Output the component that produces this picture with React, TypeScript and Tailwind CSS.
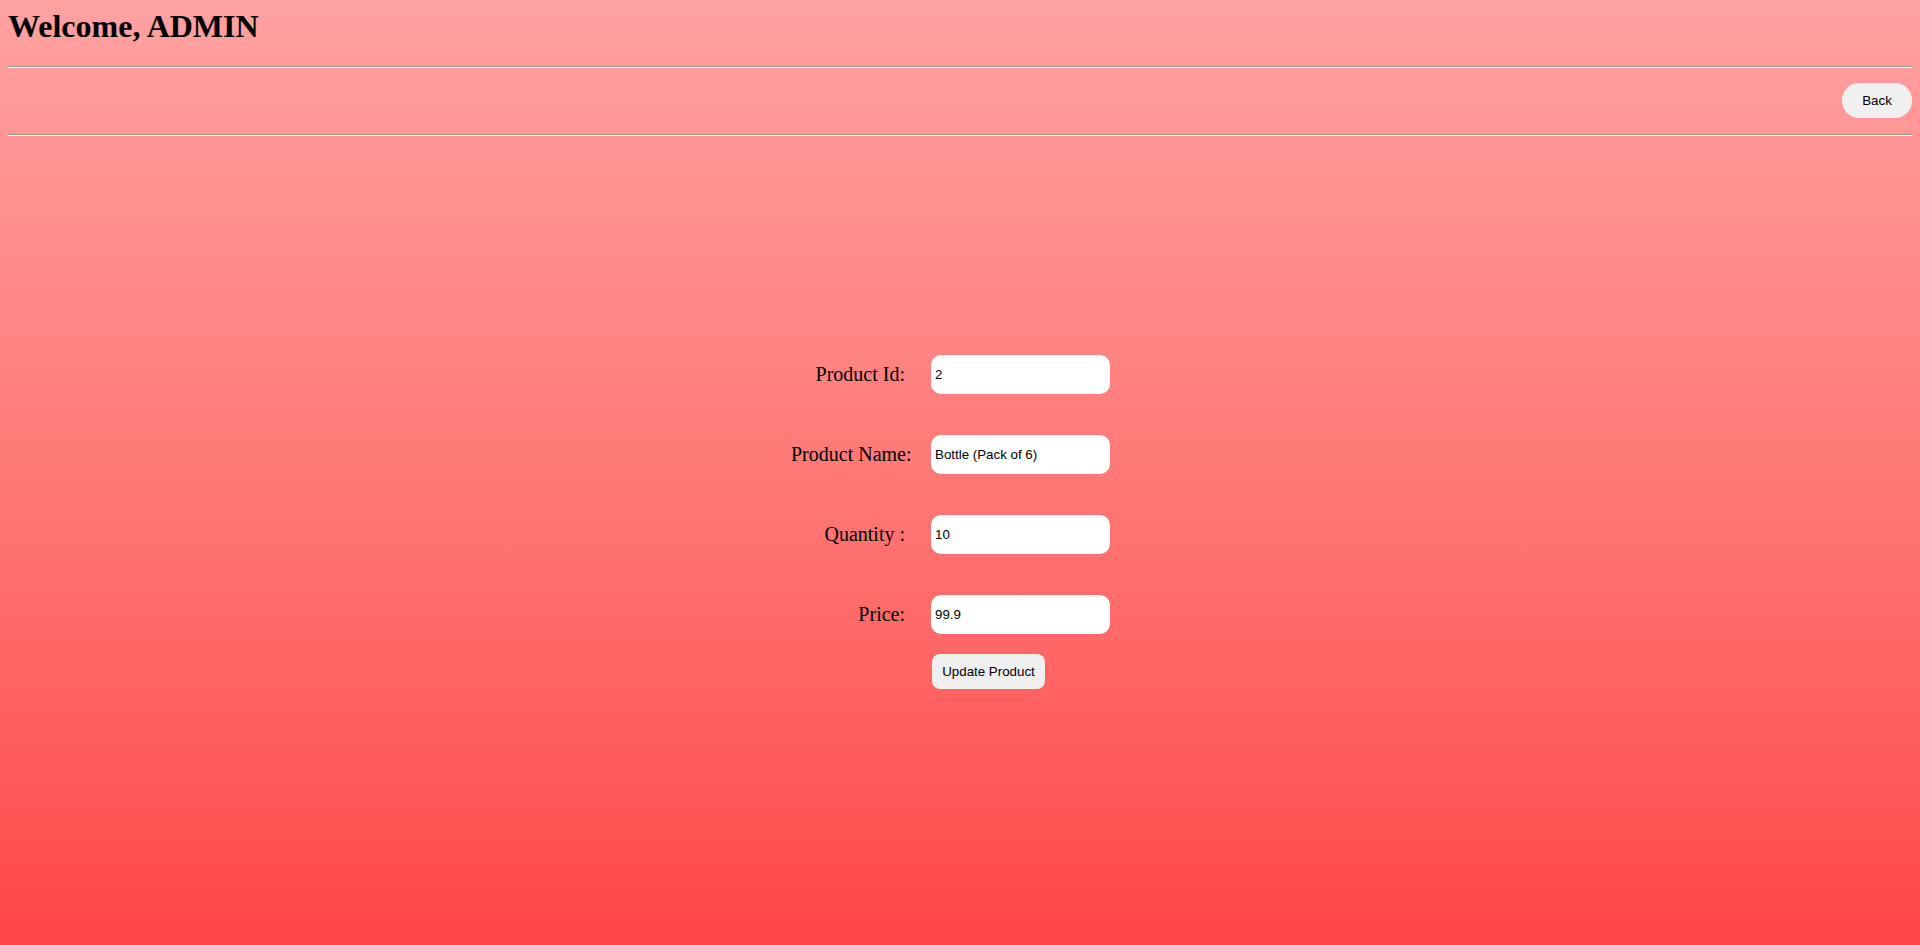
const fields = [
  { label: 'Product Id:', value: '2' },
  { label: 'Product Name:', value: 'Bottle (Pack of 6)' },
  { label: 'Quantity :', value: '10' },
  { label: 'Price:', value: '99.9' },
];

const Divider = () => (
  <hr className="h-0 border-0 border-t border-b border-t-[#9a9a9a] border-b-[#eeeeee]" />
);

export default function App() {
  return (
    <div className="min-h-[945px] w-full bg-gradient-to-b from-[#ffa2a2] to-[#ff4448] p-2 font-['Liberation_Serif',serif] text-black">
      <h1 className="text-[32px] leading-[37px] font-bold">Welcome, ADMIN</h1>

      <div className="mt-[21px]">
        <Divider />
        <div className="flex justify-end pt-[15px] pb-[16px]">
          <button className="h-[35px] w-[70px] rounded-[17px] bg-[#f0f0f0] font-['Liberation_Sans',Arial,sans-serif] text-[13.33px] text-black">
            Back
          </button>
        </div>
        <Divider />
      </div>

      <form className="mx-auto mt-[219px] flex w-[338px] flex-col gap-[41px]">
        {fields.map((f) => (
          <div key={f.label} className="flex items-center gap-[26px]">
            <label className="w-[114px] shrink-0 whitespace-nowrap text-right text-[20px] leading-[23px]">
              {f.label}
            </label>
            <input
              defaultValue={f.value}
              className="h-[39px] w-[179px] rounded-[10px] border-0 bg-white pl-[4px] font-['Liberation_Sans',Arial,sans-serif] text-[13.33px] text-black outline-none"
            />
          </div>
        ))}
      </form>
      <div className="mx-auto mt-[20px] w-[338px] pl-[141px]">
        <button className="h-[35px] w-[113px] rounded-[8px] bg-[#efefef] font-['Liberation_Sans',Arial,sans-serif] text-[13.33px] text-black">
          Update Product
        </button>
      </div>
    </div>
  );
}
